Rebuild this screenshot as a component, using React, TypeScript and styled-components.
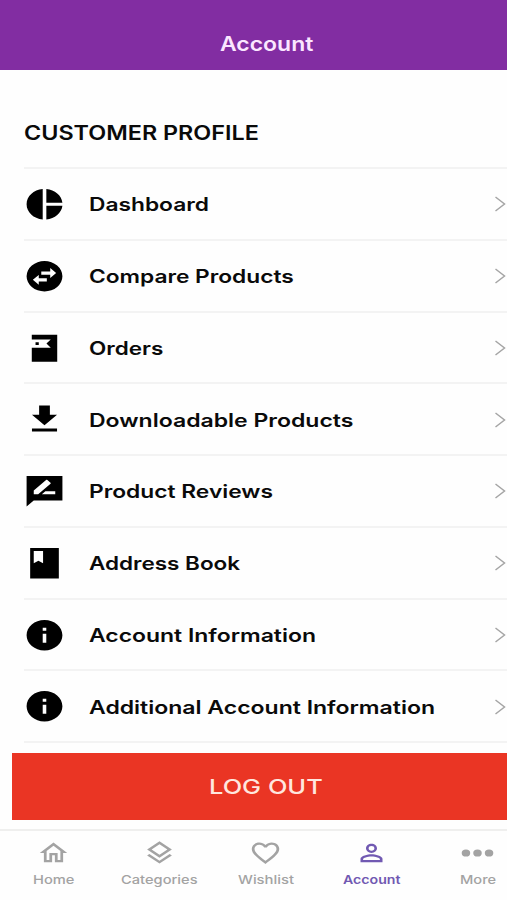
import React, { useLayoutEffect, useRef, useState } from "react";
import styled, { createGlobalStyle } from "styled-components";

const GlobalStyle = createGlobalStyle`
  * { box-sizing: border-box; }
  html, body { margin: 0; padding: 0; background: #fefefe; overflow: hidden; }
  body { font-family: Inter, "Liberation Sans", sans-serif; }
`;

const Screen = styled.div`
  width: 507px;
  height: 900px;
  display: flex;
  flex-direction: column;
  overflow: hidden;
  background: #fefefe;
`;

const Header = styled.header`
  height: 70px;
  flex: none;
  display: flex;
  justify-content: center;
  padding: 31px 0 0 25px;
  background: #822da2;
  color: #fbe6ff;
  font-size: 20px;
  line-height: 26px;
  font-weight: 560;
`;

const Content = styled.main`
  height: 683px;
  flex: none;
  padding-left: 24px;
`;

const Heading = styled.h1`
  margin: 0;
  height: 97px;
  padding-top: 50px;
  font-size: 19.8px;
  line-height: 26px;
  font-weight: 570;
  color: #0a0a0a;
`;

const List = styled.ul`
  list-style: none;
  margin: 0;
  padding: 0;
  border-bottom: 2px solid #f3f3f3;
`;

const Row = styled.li`
  height: 71.75px;
  border-top: 2px solid #f3f3f3;
  display: flex;
  align-items: center;
  padding: 1px 1px 0 0;
  font-size: 18.4px;
  line-height: 24px;
  font-weight: 570;
  color: #0a0a0a;
`;

const RowIcon = styled.svg`
  width: 43px;
  height: 36.5px;
  margin: 0 22.5px 0 -1px;
  flex: none;
  fill: #000;
`;

const Chevron = styled.svg`
  width: 12px;
  height: 16px;
  margin-left: auto;
  flex: none;
  fill: none;
  stroke: #a5a5a5;
  stroke-width: 1.5;
`;

const LogOut = styled.button`
  height: 67px;
  flex: none;
  margin: 0 0 0 12px;
  padding: 0 0 0 13px;
  border: 0;
  display: flex;
  align-items: center;
  justify-content: center;
  background: #ea3524;
  color: #ffe7df;
  font: 500 20.5px/26px Inter, sans-serif;
`;

const TabBar = styled.nav`
  height: 71px;
  flex: none;
  margin-top: 9px;
  border-top: 2px solid #efefee;
  padding-right: 1px;
  display: grid;
  grid-template-columns: repeat(5, 106px);
`;

const Tab = styled.a<{ $active?: boolean }>`
  display: flex;
  flex-direction: column;
  align-items: center;
  padding: 7.5px 0 0 1px;
  color: ${(p) => (p.$active ? "#7159b2" : "#a3a3a3")};
  font-size: 12.2px;
  line-height: 16px;
  font-weight: ${(p) => (p.$active ? 600 : 500)};
`;

const TabIcon = styled.svg`
  width: 33px;
  height: 28px;
  margin-bottom: 5.5px;
  fill: currentColor;
`;

const TextBox = styled.span`
  display: block;
  flex: none;
  text-align: left;
  white-space: nowrap;
`;

const TextRun = styled.span`
  display: inline-block;
  transform-origin: 0 50%;
`;

// Widens a label horizontally until it spans the given width.
function WideText({ width, children }: { width: number; children: string }) {
  const ref = useRef<HTMLSpanElement>(null);
  const [scale, setScale] = useState(1);
  useLayoutEffect(() => {
    if (ref.current) setScale(width / ref.current.offsetWidth);
  }, [width, children]);
  return (
    <TextBox style={{ width }}>
      <TextRun ref={ref} style={{ transform: `scaleX(${scale})` }}>
        {children}
      </TextRun>
    </TextBox>
  );
}

const INFO =
  "M12 2C6.48 2 2 6.48 2 12s4.48 10 10 10 10-4.48 10-10S17.52 2 12 2zm1 15h-2v-6h2v6zm0-8h-2V7h2v2z";

const rows = [
  {
    label: "Dashboard",
    width: 120,
    path: "M11 2v20c-5.07-.5-9-4.79-9-10s3.93-9.5 9-10zm2.03 0v8.99H22c-.47-4.74-4.24-8.52-8.97-8.99zm0 11.01V22c4.74-.47 8.5-4.25 8.97-8.99h-8.97z",
  },
  {
    label: "Compare Products",
    width: 205,
    path: "M12 2A10 10 0 1 0 12 22A10 10 0 1 0 12 2zM15.2 6.6l3.3 3.3-3.3 3.2v-2.1h-5V8.8h5zM8.8 11.1v2.2h4.5v2.1H8.8v2.2l-3.3-3.3z",
  },
  {
    label: "Orders",
    width: 74.5,
    path: "M4.9 3.1h14.2v17.8H4.9v-9.3h10.6l-2.4-2.7 2.4-2.7H4.9zM7 8h1.8v1.8H7z",
  },
  {
    label: "Downloadable Products",
    width: 264,
    path: "M19 9h-4V3H9v6H5l7 7 7-7zM5 18v2h14v-2H5z",
  },
  {
    label: "Product Reviews",
    width: 184.5,
    path: "M22 2H2.01L2 22l4-4h16V2zM6 14v-2.47l6.88-6.88c.2-.2.51-.2.71 0l1.77 1.77c.2.2.2.51 0 .71L8.47 14H6zm12 0h-7.5l2-2H18v2z",
  },
  {
    label: "Address Book",
    width: 151.5,
    path: "M4 2h16v20H4zM6 4v8l2.6-1.6 2.6 1.6V4z",
  },
  { label: "Account Information", width: 227, path: INFO },
  { label: "Additional Account Information", width: 346.5, path: INFO },
];

const tabs = [
  {
    label: "Home",
    width: 41,
    path: "M12 5.69l5 4.5V18h-2v-6H9v6H7v-7.81l5-4.5M12 3L2 12h3v8h6v-6h2v6h6v-8h3L12 3z",
  },
  {
    label: "Categories",
    width: 77,
    path: "M11.99 18.54l-7.37-5.73L3 14.07l9 7 9-7-1.63-1.27-7.38 5.74zM12 16l7.36-5.73L21 9l-9-7-9 7 1.63 1.27L12 16zm0-11.47L17.74 9 12 13.47 6.26 9 12 4.53z",
  },
  {
    label: "Wishlist",
    width: 56,
    path: "M16.5 3c-1.74 0-3.41.81-4.5 2.09C10.91 3.81 9.24 3 7.5 3 4.42 3 2 5.42 2 8.5c0 3.78 3.4 6.86 8.55 11.54L12 21.35l1.45-1.32C18.6 15.36 22 12.28 22 8.5 22 5.42 19.58 3 16.5 3zm-4.4 15.55l-.1.1-.1-.1C7.14 14.24 4 11.39 4 8.5 4 6.5 5.5 5 7.5 5c1.54 0 3.04.99 3.57 2.36h1.87C13.46 5.99 14.96 5 16.5 5c2 0 3.5 1.5 3.5 3.5 0 2.89-3.14 5.74-7.9 10.05z",
  },
  {
    label: "Account",
    width: 58,
    active: true,
    path: "M12 5.9a2.1 2.1 0 1 1 0 4.2 2.1 2.1 0 0 1 0-4.2m0 9c2.97 0 6.1 1.46 6.1 2.1v1.1H5.9V17c0-.64 3.13-2.1 6.1-2.1M12 4C9.79 4 8 5.79 8 8s1.79 4 4 4 4-1.79 4-4-1.79-4-4-4zm0 9c-2.67 0-8 1.34-8 4v3h16v-3c0-2.66-5.33-4-8-4z",
  },
  {
    label: "More",
    width: 36,
    path: "M.5 12a3.1 3.1 0 1 0 6.2 0 3.1 3.1 0 1 0-6.2 0zM8.9 12a3.1 3.1 0 1 0 6.2 0 3.1 3.1 0 1 0-6.2 0zM17.3 12a3.1 3.1 0 1 0 6.2 0 3.1 3.1 0 1 0-6.2 0z",
  },
];

export default function App() {
  return (
    <>
      <GlobalStyle />
      <Screen>
        <Header>
          <WideText width={93}>Account</WideText>
        </Header>
        <Content>
          <Heading>
            <WideText width={235}>CUSTOMER PROFILE</WideText>
          </Heading>
          <List>
            {rows.map((r) => (
              <Row key={r.label}>
                <RowIcon viewBox="0 0 24 24" preserveAspectRatio="none">
                  <path fillRule="evenodd" d={r.path} />
                </RowIcon>
                <WideText width={r.width}>{r.label}</WideText>
                <Chevron viewBox="0 0 12 16">
                  <path d="M1.5 1L10.5 8L1.5 15" />
                </Chevron>
              </Row>
            ))}
          </List>
        </Content>
        <LogOut>
          <WideText width={114}>LOG OUT</WideText>
        </LogOut>
        <TabBar>
          {tabs.map((t) => (
            <Tab key={t.label} $active={t.active}>
              <TabIcon viewBox="0 0 24 24" preserveAspectRatio="none">
                <path fillRule="evenodd" d={t.path} />
              </TabIcon>
              <WideText width={t.width}>{t.label}</WideText>
            </Tab>
          ))}
        </TabBar>
      </Screen>
    </>
  );
}
